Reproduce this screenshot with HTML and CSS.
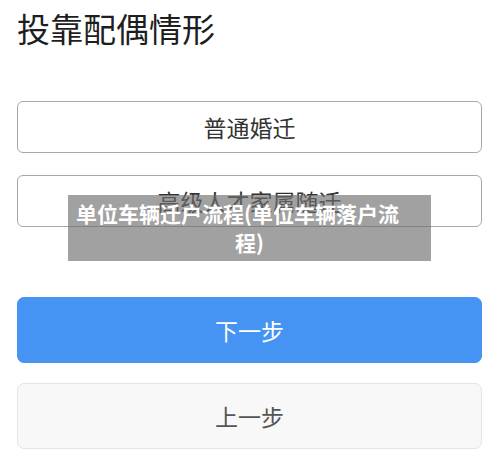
FILE: index.html
```html
<!DOCTYPE html>
<html lang="zh">
<head>
<meta charset="utf-8">
<title>投靠配偶情形</title>
<link rel="stylesheet" href="styles.css">
</head>
<body>
<main class="page">
  <h1 class="title">投靠配偶情形</h1>
  <div class="options">
    <div class="option">普通婚迁</div>
    <div class="option">高级人才家属随迁</div>
  </div>
  <div class="actions">
    <button class="btn btn-primary">下一步</button>
    <button class="btn btn-default">上一步</button>
  </div>
  <div class="caption">
    <span class="caption-line first">单位车辆迁户流程(单位车辆落户流</span>
    <span class="caption-line">程)</span>
  </div>
</main>
</body>
</html>
```
FILE: styles.css
```css
html, body {
  margin: 0;
  padding: 0;
  background: #ffffff;
}
body {
  font-family: "Noto Sans CJK SC", "Noto Sans", sans-serif;
  width: 500px;
  height: 457px;
  overflow: hidden;
}
.page {
  position: relative;
  padding: 0 18px 0 17px;
}
.title {
  margin: 0;
  padding-top: 8px;
  font-size: 33px;
  line-height: 40px;
  font-weight: 400;
  color: #1e1e1e;
}
.options {
  margin-top: 53px;
  display: flex;
  flex-direction: column;
  gap: 22px;
}
.option {
  height: 50px;
  border: 1px solid #a8a8a8;
  border-radius: 6px;
  display: flex;
  align-items: center;
  justify-content: center;
  font-size: 23px;
  color: #333;
}
.actions {
  margin-top: 70px;
  display: flex;
  flex-direction: column;
  gap: 20px;
}
.btn {
  height: 66px;
  width: 100%;
  border-radius: 7px;
  font-family: inherit;
  font-size: 23px;
  cursor: pointer;
}
.btn-primary {
  background: #4593f2;
  border: 1px solid #4593f2;
  color: #ffffff;
}
.btn-default {
  background: #f8f8f8;
  border: 1px solid #e4e4e4;
  color: #555555;
}
.caption {
  position: absolute;
  left: 68px;
  top: 195px;
  width: 363px;
  height: 66px;
  box-sizing: border-box;
  padding-top: 4px;
  background: rgba(110, 110, 110, 0.65);
  color: #ffffff;
  font-size: 21px;
  font-weight: 700;
  line-height: 29px;
  text-align: center;
}
.caption-line {
  display: block;
  white-space: nowrap;
}
.caption-line.first {
  padding-right: 24px;
}
```
